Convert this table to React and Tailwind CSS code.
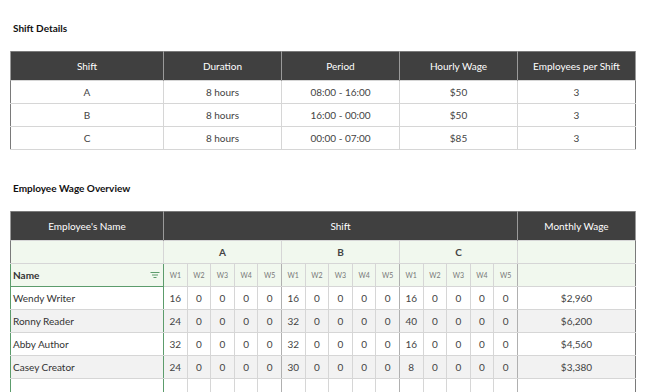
import React from "react";

const shifts = [
  { shift: "A", duration: "8 hours", period: "08:00 - 16:00", wage: "$50", employees: 3 },
  { shift: "B", duration: "8 hours", period: "16:00 - 00:00", wage: "$50", employees: 3 },
  { shift: "C", duration: "8 hours", period: "00:00 - 07:00", wage: "$85", employees: 3 },
];

const employees = [
  { name: "Wendy Writer", hours: [16, 0, 0, 0, 0, 16, 0, 0, 0, 0, 16, 0, 0, 0, 0], monthly: "$2,960" },
  { name: "Ronny Reader", hours: [24, 0, 0, 0, 0, 32, 0, 0, 0, 0, 40, 0, 0, 0, 0], monthly: "$6,200" },
  { name: "Abby Author", hours: [32, 0, 0, 0, 0, 32, 0, 0, 0, 0, 16, 0, 0, 0, 0], monthly: "$4,560" },
  { name: "Casey Creator", hours: [24, 0, 0, 0, 0, 30, 0, 0, 0, 0, 8, 0, 0, 0, 0], monthly: "$3,380" },
  { name: "", hours: Array(15).fill(""), monthly: "" },
];

const weeks = ["W1", "W2", "W3", "W4", "W5"];

const FilterIcon = () => (
  <svg width="10" height="8" viewBox="0 0 10 8" className="shrink-0">
    <line x1="0.5" y1="1.5" x2="9.5" y2="1.5" stroke="#5c9c6c" strokeWidth="1" />
    <line x1="2" y1="4" x2="8" y2="4" stroke="#5c9c6c" strokeWidth="1" />
    <line x1="3.5" y1="6.5" x2="6.5" y2="6.5" stroke="#5c9c6c" strokeWidth="1" />
  </svg>
);

const App = () => {
  return (
    <div
      className="w-[650px] h-[392px] overflow-hidden bg-white pl-[10px] pt-[22px]"
      style={{ fontFamily: "Lato, 'Open Sans', sans-serif" }}
    >
      {/* Shift Details */}
      <h2 className="pl-[3px] text-[10px] font-bold text-[#111] leading-[12px]">Shift Details</h2>
      <table className="mt-[17px] w-[625px] table-fixed border-collapse border border-[#7a7a7a] text-[10px] text-[#444]">
        <colgroup>
          <col className="w-[153px]" />
          <col className="w-[118px]" />
          <col className="w-[118px]" />
          <col className="w-[118px]" />
          <col className="w-[118px]" />
        </colgroup>
        <thead>
          <tr className="h-[29px] bg-[#404040] text-white">
            {["Shift", "Duration", "Period", "Hourly Wage", "Employees per Shift"].map((h) => (
              <th key={h} className="border-x border-[#9a9a9a] font-normal">
                {h}
              </th>
            ))}
          </tr>
        </thead>
        <tbody>
          {shifts.map((s) => (
            <tr key={s.shift} className="h-[23px] text-center">
              <td className="border border-[#d6d6d6] border-l-[#7a7a7a]">{s.shift}</td>
              <td className="border border-[#d6d6d6]">{s.duration}</td>
              <td className="border border-[#d6d6d6]">{s.period}</td>
              <td className="border border-[#d6d6d6]">{s.wage}</td>
              <td className="border border-[#d6d6d6] border-r-[#7a7a7a]">{s.employees}</td>
            </tr>
          ))}
        </tbody>
      </table>

      {/* Employee Wage Overview */}
      <h2 className="mt-[32px] pl-[3px] text-[10px] font-bold text-[#111] leading-[12px]">
        Employee Wage Overview
      </h2>
      <table className="mt-[17px] w-[625px] table-fixed border-collapse border border-[#7a7a7a] text-[10px] text-[#444]">
        <colgroup>
          <col className="w-[153px]" />
          {Array.from({ length: 15 }).map((_, i) => (
            <col key={i} className="w-[23.6px]" />
          ))}
          <col className="w-[118px]" />
        </colgroup>
        <thead>
          <tr className="h-[29px] bg-[#404040] text-white">
            <th className="border-x border-[#9a9a9a] font-normal">Employee's Name</th>
            <th colSpan={15} className="border-x border-[#9a9a9a] font-normal">
              Shift
            </th>
            <th className="border-x border-[#9a9a9a] font-normal">Monthly Wage</th>
          </tr>
          <tr className="h-[23px] bg-[#f1f8ee] text-[#444]">
            <th className="border border-[#d6d6d6] border-l-[#7a7a7a]"></th>
            {["A", "B", "C"].map((g) => (
              <th key={g} colSpan={5} className="border border-[#d6d6d6] font-bold">
                {g}
              </th>
            ))}
            <th className="border border-[#d6d6d6] border-r-[#7a7a7a]"></th>
          </tr>
          <tr className="h-[23px] bg-[#f1f8ee]">
            <th className="border border-[#5c9c6c] text-left font-normal text-[#333]">
              <div className="flex items-center justify-between pl-[2px] pr-[3px]">
                <span className="text-[10px] font-bold">Name</span>
                <FilterIcon />
              </div>
            </th>
            {[0, 1, 2].map((g) =>
              weeks.map((w) => (
                <th
                  key={g + w}
                  className={`border border-[#d6d6d6] text-[7px] font-normal text-[#777] ${
                    w === "W5" ? "border-r-[#b0b0b0]" : ""
                  }`}
                >
                  {w}
                </th>
              ))
            )}
            <th className="border border-[#d6d6d6] border-r-[#7a7a7a]"></th>
          </tr>
        </thead>
        <tbody>
          {employees.map((e, r) => (
            <tr key={r} className={`h-[23px] ${r % 2 === 1 ? "bg-[#f2f2f2]" : "bg-white"}`}>
              <td className="border border-[#d6d6d6] border-x-[#5c9c6c] pl-[2px] text-[#333]">{e.name}</td>
              {e.hours.map((h, i) => (
                <td
                  key={i}
                  className={`border border-[#d6d6d6] text-center ${
                    i % 5 === 4 ? "border-r-[#b0b0b0]" : ""
                  }`}
                >
                  {h}
                </td>
              ))}
              <td className="border border-[#d6d6d6] border-r-[#7a7a7a] text-center">{e.monthly}</td>
            </tr>
          ))}
        </tbody>
      </table>
    </div>
  );
};

export default App;
